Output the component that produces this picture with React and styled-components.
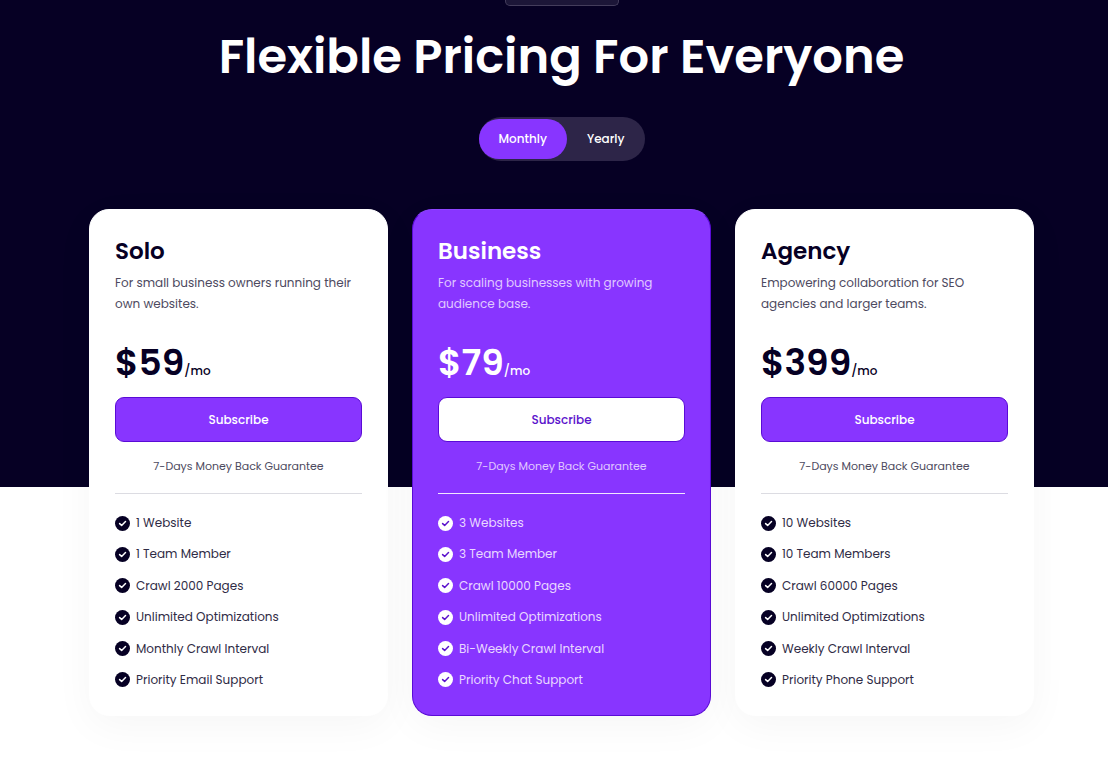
import React, { useState } from 'react';
import styled, { createGlobalStyle } from 'styled-components';

const plans = [
    {
        name: 'Solo',
        description: 'For small business owners running their own websites.',
        price: '$59',
        features: [
            '1 Website',
            '1 Team Member',
            'Crawl 2000 Pages',
            'Unlimited Optimizations',
            'Monthly Crawl Interval',
            'Priority Email Support',
        ],
    },
    {
        name: 'Business',
        description: 'For scaling businesses with growing audience base.',
        price: '$79',
        featured: true,
        features: [
            '3 Websites',
            '3 Team Member',
            'Crawl 10000 Pages',
            'Unlimited Optimizations',
            'Bi-Weekly Crawl Interval',
            'Priority Chat Support',
        ],
    },
    {
        name: 'Agency',
        description: 'Empowering collaboration for SEO agencies and larger teams.',
        price: '$399',
        features: [
            '10 Websites',
            '10 Team Members',
            'Crawl 60000 Pages',
            'Unlimited Optimizations',
            'Weekly Crawl Interval',
            'Priority Phone Support',
        ],
    },
];

const CheckIcon = () => (
    <svg width="15" height="15" viewBox="0 0 14 14" aria-hidden="true">
        <circle cx="7" cy="7" r="7" fill="currentColor" />
        <path
            d="M4.3 7.1L6.2 8.8L9.8 5.2"
            fill="none"
            stroke="var(--tick)"
            strokeWidth="1.4"
            strokeLinecap="round"
            strokeLinejoin="round"
        />
    </svg>
);

const PlanCard = ({ plan }) => (
    <Card $featured={plan.featured}>
        <PlanName>{plan.name}</PlanName>
        <Description $featured={plan.featured}>{plan.description}</Description>
        <Price>
            {plan.price}
            <Period>/mo</Period>
        </Price>
        <Subscribe type="button" $featured={plan.featured}>
            Subscribe
        </Subscribe>
        <Guarantee $featured={plan.featured}>7-Days Money Back Guarantee</Guarantee>
        <Divider $featured={plan.featured} />
        <Features>
            {plan.features.map((feature) => (
                <Feature key={feature} $featured={plan.featured}>
                    <CheckIcon />
                    <span>{feature}</span>
                </Feature>
            ))}
        </Features>
    </Card>
);

const App = () => {
    const [billing, setBilling] = useState('Monthly');
    return (
        <Page>
            <GlobalStyle />
            <Badge />
            <Title>Flexible Pricing For Everyone</Title>
            <Toggle role="group" aria-label="Billing period">
                {['Monthly', 'Yearly'].map((item) => (
                    <ToggleButton
                        key={item}
                        type="button"
                        $active={billing === item}
                        aria-pressed={billing === item}
                        onClick={() => setBilling(item)}
                    >
                        {item}
                    </ToggleButton>
                ))}
            </Toggle>
            <Plans>
                {plans.map((plan) => (
                    <PlanCard key={plan.name} plan={plan} />
                ))}
            </Plans>
        </Page>
    );
};

const GlobalStyle = createGlobalStyle`
    * {
        box-sizing: border-box;
    }
    body {
        margin: 0;
        font-family: Poppins, Inter, 'Liberation Sans', sans-serif;
        color: #060024;
        background: #fff;
    }
    h1, h2, p, ul {
        margin: 0;
        padding: 0;
    }
    button {
        font: inherit;
        cursor: pointer;
    }
`;

const Page = styled.main`
    display: flex;
    flex-direction: column;
    align-items: center;
    padding: 0 74px 43px 89px;
    background: linear-gradient(#060024 487px, #fff 487px);
`;
const Badge = styled.div`
    width: 114px;
    height: 6px;
    border: 1px solid #443d5c;
    border-top: none;
    border-radius: 0 0 5px 5px;
    background: #1c1638;
`;
const Title = styled.h1`
    margin-top: 18px;
    font-size: 48px;
    font-weight: 600;
    line-height: 66px;
    text-align: center;
    color: #fff;
`;
const Toggle = styled.div`
    display: flex;
    margin-top: 27px;
    padding: 2px 0;
    border-radius: 22px;
    background: #2d2548;
`;
const ToggleButton = styled.button`
    height: 40px;
    padding: 0 20px;
    border: none;
    border-radius: 20px;
    background: ${(props) => (props.$active ? '#8835ff' : 'transparent')};
    color: #fff;
    font-size: 12px;
    font-weight: 500;
`;
const Plans = styled.section`
    display: grid;
    grid-template-columns: repeat(3, 1fr);
    gap: 24px;
    width: 100%;
    margin-top: 48px;
`;
const Card = styled.article`
    --tick: ${(props) => (props.$featured ? '#5a12cc' : '#fff')};
    display: flex;
    flex-direction: column;
    min-height: 507px;
    padding: 26px 25px 25px;
    border: 1px solid ${(props) => (props.$featured ? '#5a0bd6' : '#fff')};
    border-top-color: ${(props) => (props.$featured ? '#8f45ff' : '#fff')};
    border-radius: 20px;
    background: ${(props) => (props.$featured ? '#8835ff' : '#fff')};
    color: ${(props) => (props.$featured ? '#fff' : '#060024')};
    box-shadow: 0 10px 40px rgba(0, 0, 0, 0.04);
`;
const PlanName = styled.h2`
    font-size: 23px;
    font-weight: 600;
    line-height: 30px;
`;
const Description = styled.p`
    margin-top: 6px;
    font-size: 12px;
    line-height: 21px;
    color: ${(props) => (props.$featured ? '#e0c9ff' : '#4d4a60')};
`;
const Price = styled.p`
    margin-top: 24px;
    font-size: 36px;
    font-weight: 600;
    line-height: 50px;
`;
const Period = styled.span`
    font-size: 12px;
    font-weight: 500;
    line-height: 1;
`;
const Subscribe = styled.button`
    height: 45px;
    margin-top: 9px;
    border: 1px solid #5a0bd6;
    border-radius: 9px;
    background: ${(props) => (props.$featured ? '#fff' : '#8835ff')};
    color: ${(props) => (props.$featured ? '#5a12cc' : '#fff')};
    font-size: 12px;
    font-weight: 500;
`;
const Guarantee = styled.p`
    margin-top: 14px;
    font-size: 11px;
    line-height: 20px;
    text-align: center;
    color: ${(props) => (props.$featured ? '#e0c9ff' : '#4d4a60')};
`;
const Divider = styled.hr`
    width: 100%;
    height: 1px;
    margin: 17px 0 0;
    border: none;
    background: ${(props) => (props.$featured ? '#f1e6ff' : '#dcdce2')};
`;
const Features = styled.ul`
    display: flex;
    flex: 1;
    flex-direction: column;
    justify-content: space-between;
    margin-top: 19px;
    list-style: none;
`;
const Feature = styled.li`
    display: flex;
    align-items: center;
    gap: 6px;
    font-size: 12px;
    line-height: 20px;

    span {
        color: ${(props) => (props.$featured ? '#e9d8ff' : '#2f2b45')};
    }
`;

export default App;
